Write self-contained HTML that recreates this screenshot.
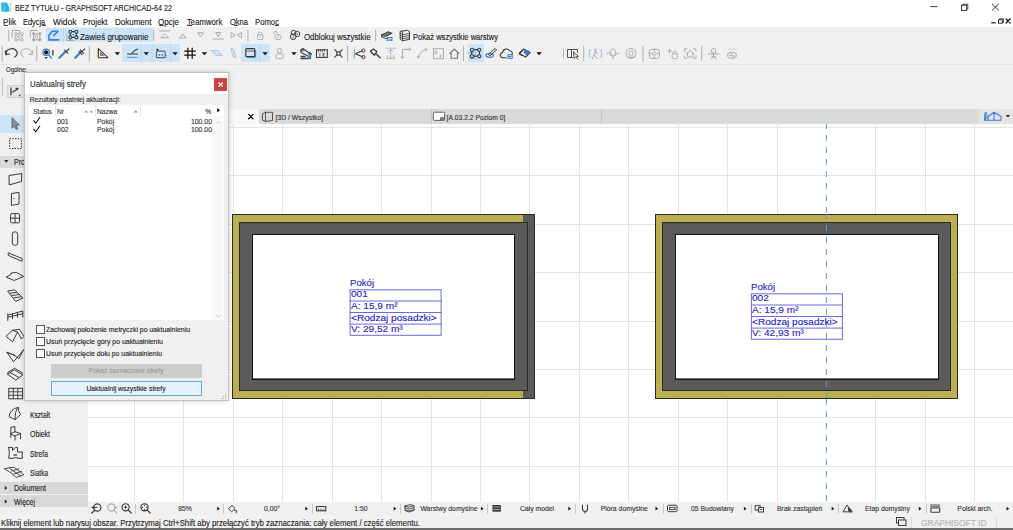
<!DOCTYPE html><html><head><meta charset="utf-8"><style>
html,body{margin:0;padding:0;width:1013px;height:530px;overflow:hidden;background:#f0f0f0;position:relative;font-family:"Liberation Sans",sans-serif}
.a{position:absolute}
.t{white-space:nowrap;line-height:1;-webkit-text-stroke:0.12px currentColor}
svg{position:absolute;overflow:visible}
</style></head><body>
<div class="a" style="left:0px;top:0px;width:1013px;height:27px;background:#ffffff;"></div>
<div class="a t" style="left:15px;top:3.95px;font-size:8.8px;color:#1a1a1a;transform:scaleX(0.8204543984782399);transform-origin:0 0;">BEZ TYTUŁU - GRAPHISOFT ARCHICAD-64 22</div>
<div class="a t" style="left:3.3px;top:17.67px;font-size:8.3px;color:#1a1a1a;transform:scaleX(0.9719864622847055);transform-origin:0 0;">Plik</div>
<div class="a t" style="left:23.4px;top:17.67px;font-size:8.3px;color:#1a1a1a;transform:scaleX(0.891148539182499);transform-origin:0 0;">Edycja</div>
<div class="a t" style="left:52.8px;top:17.67px;font-size:8.3px;color:#1a1a1a;transform:scaleX(1.0190923979366089);transform-origin:0 0;">Widok</div>
<div class="a t" style="left:83.3px;top:17.67px;font-size:8.3px;color:#1a1a1a;transform:scaleX(0.9484670280680911);transform-origin:0 0;">Projekt</div>
<div class="a t" style="left:114.8px;top:17.67px;font-size:8.3px;color:#1a1a1a;transform:scaleX(0.9649459427864713);transform-origin:0 0;">Dokument</div>
<div class="a t" style="left:158.4px;top:17.67px;font-size:8.3px;color:#1a1a1a;transform:scaleX(0.9685830293299047);transform-origin:0 0;">Opcje</div>
<div class="a t" style="left:187px;top:17.67px;font-size:8.3px;color:#1a1a1a;transform:scaleX(0.9334137069522215);transform-origin:0 0;">Teamwork</div>
<div class="a t" style="left:229.7px;top:17.67px;font-size:8.3px;color:#1a1a1a;transform:scaleX(0.9073952714624186);transform-origin:0 0;">Okna</div>
<div class="a t" style="left:255px;top:17.67px;font-size:8.3px;color:#1a1a1a;transform:scaleX(0.9291105581075179);transform-origin:0 0;">Pomoc</div>
<div class="a" style="left:3.8px;top:25px;width:4px;height:0.8px;background:#444;"></div>
<div class="a" style="left:41.5px;top:25px;width:4px;height:0.8px;background:#444;"></div>
<div class="a" style="left:158.6px;top:25px;width:5px;height:0.8px;background:#444;"></div>
<div class="a" style="left:187.3px;top:25px;width:4.5px;height:0.8px;background:#444;"></div>
<div class="a" style="left:234.3px;top:25px;width:4px;height:0.8px;background:#444;"></div>
<div class="a" style="left:275px;top:25px;width:3.8px;height:0.8px;background:#444;"></div>
<div class="a" style="left:88px;top:124px;width:925px;height:378px;background:#ffffff;"></div>
<svg width="1013" height="530" style="left:0;top:0"><rect x="134" y="124" width="1" height="378" fill="#e4e4e4"/><rect x="183" y="124" width="1" height="378" fill="#e4e4e4"/><rect x="233" y="124" width="1" height="378" fill="#e4e4e4"/><rect x="282" y="124" width="1" height="378" fill="#e4e4e4"/><rect x="332" y="124" width="1" height="378" fill="#e4e4e4"/><rect x="381" y="124" width="1" height="378" fill="#e4e4e4"/><rect x="431" y="124" width="1" height="378" fill="#e4e4e4"/><rect x="480" y="124" width="1" height="378" fill="#e4e4e4"/><rect x="529" y="124" width="1" height="378" fill="#e4e4e4"/><rect x="579" y="124" width="1" height="378" fill="#e4e4e4"/><rect x="628" y="124" width="1" height="378" fill="#e4e4e4"/><rect x="678" y="124" width="1" height="378" fill="#e4e4e4"/><rect x="727" y="124" width="1" height="378" fill="#e4e4e4"/><rect x="777" y="124" width="1" height="378" fill="#e4e4e4"/><rect x="875" y="124" width="1" height="378" fill="#e4e4e4"/><rect x="925" y="124" width="1" height="378" fill="#e4e4e4"/><rect x="974" y="124" width="1" height="378" fill="#e4e4e4"/><rect x="88" y="127" width="925" height="1" fill="#e4e4e4"/><rect x="88" y="175" width="925" height="1" fill="#e4e4e4"/><rect x="88" y="224" width="925" height="1" fill="#e4e4e4"/><rect x="88" y="272" width="925" height="1" fill="#e4e4e4"/><rect x="88" y="321" width="925" height="1" fill="#e4e4e4"/><rect x="88" y="369" width="925" height="1" fill="#e4e4e4"/><rect x="88" y="417" width="925" height="1" fill="#e4e4e4"/><rect x="88" y="466" width="925" height="1" fill="#e4e4e4"/><line x1="826.4" y1="124" x2="826.4" y2="502" stroke="#5aa2da" stroke-width="1" stroke-dasharray="6 6" stroke-dashoffset="1"/><rect x="232" y="214" width="303" height="185" fill="#2a2a2a"/><rect x="233" y="215" width="290" height="183" fill="#bcaf52"/><rect x="523" y="215" width="11" height="183" fill="#5a5a5a"/><rect x="239" y="222" width="289" height="169" fill="#2a2a2a"/><rect x="240" y="223" width="287" height="167" fill="#5a5a5a"/><rect x="252" y="234" width="263" height="146" fill="#151515"/><rect x="253" y="235" width="261" height="143.4" fill="#ffffff"/><rect x="655" y="214" width="303" height="185" fill="#2a2a2a"/><rect x="656" y="215" width="301" height="183" fill="#bcaf52"/><rect x="662" y="222" width="289" height="169" fill="#2a2a2a"/><rect x="663" y="223" width="287" height="167" fill="#5a5a5a"/><rect x="675" y="234" width="264" height="146" fill="#151515"/><rect x="676" y="235" width="262" height="143.4" fill="#ffffff"/><line x1="826.4" y1="214" x2="826.4" y2="398" stroke="#5aa2da" stroke-width="1" stroke-dasharray="6 6" stroke-dashoffset="1"/></svg>
<div class="a t" style="left:350.0px;top:279.18px;font-size:9px;color:#2424c4;-webkit-text-stroke:0.12px currentColor;transform:scaleX(1.07);transform-origin:0 0;">Pokój</div>
<svg width="1013" height="530" style="left:0;top:0"><rect x="350.1" y="289.8" width="91" height="45.5" fill="none" stroke="#6a6ae0" stroke-width="1"/><rect x="349.6" y="300.5" width="92" height="1" fill="#6a6ae0"/><rect x="349.6" y="312.0" width="92" height="1" fill="#6a6ae0"/><rect x="349.6" y="323.6" width="92" height="1" fill="#6a6ae0"/></svg>
<div class="a t" style="left:351.0px;top:290.38px;font-size:9px;color:#2424c4;-webkit-text-stroke:0.12px currentColor;transform:scaleX(1.12);transform-origin:0 0;">001</div>
<div class="a t" style="left:351.0px;top:301.73px;font-size:9px;color:#2424c4;-webkit-text-stroke:0.12px currentColor;transform:scaleX(1.12);transform-origin:0 0;">A: 15,9 m²</div>
<div class="a t" style="left:351.0px;top:313.98px;font-size:9px;color:#2424c4;-webkit-text-stroke:0.12px currentColor;transform:scaleX(1.12);transform-origin:0 0;">&lt;Rodzaj posadzki&gt;</div>
<div class="a t" style="left:351.0px;top:324.78px;font-size:9px;color:#2424c4;-webkit-text-stroke:0.12px currentColor;transform:scaleX(1.12);transform-origin:0 0;">V: 29,52 m³</div>
<div class="a t" style="left:751.3px;top:283.18px;font-size:9px;color:#2424c4;-webkit-text-stroke:0.12px currentColor;transform:scaleX(1.07);transform-origin:0 0;">Pokój</div>
<svg width="1013" height="530" style="left:0;top:0"><rect x="751.4" y="293.8" width="91" height="45.5" fill="none" stroke="#6a6ae0" stroke-width="1"/><rect x="750.9" y="304.5" width="92" height="1" fill="#6a6ae0"/><rect x="750.9" y="316.0" width="92" height="1" fill="#6a6ae0"/><rect x="750.9" y="327.6" width="92" height="1" fill="#6a6ae0"/></svg>
<div class="a t" style="left:752.3px;top:294.38px;font-size:9px;color:#2424c4;-webkit-text-stroke:0.12px currentColor;transform:scaleX(1.12);transform-origin:0 0;">002</div>
<div class="a t" style="left:752.3px;top:305.73px;font-size:9px;color:#2424c4;-webkit-text-stroke:0.12px currentColor;transform:scaleX(1.12);transform-origin:0 0;">A: 15,9 m²</div>
<div class="a t" style="left:752.3px;top:317.98px;font-size:9px;color:#2424c4;-webkit-text-stroke:0.12px currentColor;transform:scaleX(1.12);transform-origin:0 0;">&lt;Rodzaj posadzki&gt;</div>
<div class="a t" style="left:752.3px;top:328.78px;font-size:9px;color:#2424c4;-webkit-text-stroke:0.12px currentColor;transform:scaleX(1.12);transform-origin:0 0;">V: 42,93 m³</div>
<div class="a" style="left:88px;top:109px;width:925px;height:15px;background:#d9d9d9;"></div>
<div class="a" style="left:88px;top:109px;width:171px;height:15px;background:#f7f7f7;"></div>
<div class="a" style="left:430.5px;top:109px;width:1px;height:15px;background:#c4c4c4;"></div>
<div class="a" style="left:601px;top:109px;width:1px;height:15px;background:#c4c4c4;"></div>
<div class="a" style="left:978.7px;top:109px;width:34.3px;height:14.6px;background:#e4e4e4;"></div>
<div class="a t" style="left:275.4px;top:115.26px;font-size:6.9px;color:#333;">[3D / Wszystko]</div>
<div class="a t" style="left:446.5px;top:115.39px;font-size:6.75px;color:#333;">[A.03.2.2 Poziom 0]</div>
<div class="a" style="left:0px;top:109px;width:88px;height:393px;background:#f0f0f0;"></div>
<div class="a" style="left:0px;top:114.5px;width:88px;height:18px;background:#cce4f7;"></div>
<div class="a" style="left:0px;top:155.5px;width:88px;height:12.5px;background:#dadada;"></div>
<div class="a" style="left:0px;top:481.8px;width:88px;height:12px;background:#d9d9d9;"></div>
<div class="a" style="left:0px;top:495.3px;width:88px;height:12px;background:#d9d9d9;"></div>
<div class="a t" style="left:30.1px;top:410.87px;font-size:8.3px;color:#222;transform:scaleX(0.8029619258038088);transform-origin:0 0;">Kształt</div>
<div class="a t" style="left:30.1px;top:430.37px;font-size:8.3px;color:#222;transform:scaleX(0.8337849668570475);transform-origin:0 0;">Obiekt</div>
<div class="a t" style="left:30.1px;top:449.97px;font-size:8.3px;color:#222;transform:scaleX(0.8129037174820871);transform-origin:0 0;">Strefa</div>
<div class="a t" style="left:30.1px;top:469.37px;font-size:8.3px;color:#222;transform:scaleX(0.7803181015510854);transform-origin:0 0;">Siatka</div>
<div class="a t" style="left:13.9px;top:158.47px;font-size:8.3px;color:#222;transform:scaleX(0.8516846782652246);transform-origin:0 0;">Projekt</div>
<div class="a t" style="left:13.8px;top:484.27px;font-size:8.3px;color:#222;transform:scaleX(0.8459800046347146);transform-origin:0 0;">Dokument</div>
<div class="a t" style="left:13.8px;top:497.77px;font-size:8.3px;color:#222;transform:scaleX(0.8432417374544263);transform-origin:0 0;">Więcej</div>
<div class="a" style="left:88px;top:502px;width:925px;height:13.5px;background:#f0f0f0;"></div>
<div class="a" style="left:135px;top:504px;width:1px;height:10px;background:#c8c8c8;"></div>
<div class="a" style="left:223px;top:504px;width:1px;height:10px;background:#c8c8c8;"></div>
<div class="a" style="left:311.5px;top:504px;width:1px;height:10px;background:#c8c8c8;"></div>
<div class="a" style="left:400px;top:504px;width:1px;height:10px;background:#c8c8c8;"></div>
<div class="a" style="left:487px;top:504px;width:1px;height:10px;background:#c8c8c8;"></div>
<div class="a" style="left:575px;top:504px;width:1px;height:10px;background:#c8c8c8;"></div>
<div class="a" style="left:663px;top:504px;width:1px;height:10px;background:#c8c8c8;"></div>
<div class="a" style="left:751px;top:504px;width:1px;height:10px;background:#c8c8c8;"></div>
<div class="a" style="left:838px;top:504px;width:1px;height:10px;background:#c8c8c8;"></div>
<div class="a" style="left:926px;top:504px;width:1px;height:10px;background:#c8c8c8;"></div>
<div class="a t" style="left:-15px;width:400px;text-align:center;top:506.20px;font-size:6.85px;color:#333;">85%</div>
<div class="a t" style="left:72px;width:400px;text-align:center;top:506.20px;font-size:6.85px;color:#333;">0,00°</div>
<div class="a t" style="left:161px;width:400px;text-align:center;top:506.20px;font-size:6.85px;color:#333;">1:50</div>
<div class="a t" style="left:249px;width:400px;text-align:center;top:506.20px;font-size:6.85px;color:#333;">Warstwy domyślne</div>
<div class="a t" style="left:337px;width:400px;text-align:center;top:506.20px;font-size:6.85px;color:#333;">Cały model</div>
<div class="a t" style="left:424.29999999999995px;width:400px;text-align:center;top:506.20px;font-size:6.85px;color:#333;">Pióra domyślne</div>
<div class="a t" style="left:512.5px;width:400px;text-align:center;top:506.20px;font-size:6.85px;color:#333;">05 Budowlany</div>
<div class="a t" style="left:599.7px;width:400px;text-align:center;top:506.20px;font-size:6.85px;color:#333;">Brak zastąpień</div>
<div class="a t" style="left:687.4px;width:400px;text-align:center;top:506.20px;font-size:6.85px;color:#333;">Etap domyślny</div>
<div class="a t" style="left:775px;width:400px;text-align:center;top:506.20px;font-size:6.85px;color:#333;">Polski arch.</div>
<div class="a t" style="left:1.4px;top:519.27px;font-size:8.3px;color:#222;transform:scaleX(0.9369298685143173);transform-origin:0 0;">Kliknij element lub narysuj obszar. Przytrzymaj Ctrl+Shift aby przełączyć tryb zaznaczania: cały element / część elementu.</div>
<div class="a t" style="left:921px;top:519.27px;font-size:8.3px;color:#b4b4b4;transform:scaleX(1.0169339393211625);transform-origin:0 0;">GRAPHISOFT ID</div>
<div class="a" style="left:0px;top:528.4px;width:1013px;height:1.6px;background:#6d6d6d;"></div>
<div class="a" style="left:910.5px;top:516.5px;width:0.8px;height:11px;background:#dadada;"></div>
<div class="a" style="left:996.3px;top:516.5px;width:0.8px;height:11px;background:#dadada;"></div>
<div class="a" style="left:0px;top:63.6px;width:1013px;height:0.9px;background:#e4e4e4;"></div>
<div class="a" style="left:46px;top:28px;width:107px;height:14.2px;background:#cce4f7;"></div>
<div class="a" style="left:122.4px;top:43.7px;width:57.6px;height:18.8px;background:#cce4f7;"></div>
<div class="a" style="left:240.8px;top:43.7px;width:29px;height:18.8px;background:#cce4f7;"></div>
<div class="a" style="left:467.7px;top:43.7px;width:16.4px;height:18.8px;background:#cce4f7;"></div>
<svg width="1013" height="530" style="left:0;top:0"><rect x="8.2" y="30" width="1.1" height="11.3" fill="#b5b5b5"/><rect x="153.2" y="30" width="1.1" height="11.3" fill="#b5b5b5"/><rect x="247.4" y="30" width="1.1" height="11.3" fill="#b5b5b5"/><rect x="375.1" y="30" width="1.1" height="11.3" fill="#b5b5b5"/><rect x="1.7000000000000002" y="45.8" width="1.1" height="15.7" fill="#b5b5b5"/><rect x="36.2" y="45.8" width="1.1" height="15.7" fill="#b5b5b5"/><rect x="88.8" y="45.8" width="1.1" height="15.7" fill="#b5b5b5"/><rect x="347.0" y="45.8" width="1.1" height="15.7" fill="#b5b5b5"/><rect x="462.9" y="45.8" width="1.1" height="15.7" fill="#b5b5b5"/><rect x="583.1" y="45.8" width="1.1" height="15.7" fill="#b5b5b5"/><rect x="642.5" y="45.8" width="1.1" height="15.7" fill="#b5b5b5"/><rect x="701.2" y="45.8" width="1.1" height="15.7" fill="#b5b5b5"/><rect x="563" y="48.4" width="1" height="10.4" fill="#b5b5b5"/><rect x="63.2" y="28" width="0.8" height="14.2" fill="#b6d2ea"/><rect x="140.8" y="43.7" width="0.8" height="18.8" fill="#b6d2ea"/><rect x="151.7" y="43.7" width="0.8" height="18.8" fill="#b6d2ea"/><rect x="170" y="43.7" width="0.8" height="18.8" fill="#b6d2ea"/><rect x="259" y="43.7" width="0.8" height="18.8" fill="#b6d2ea"/><path d="M114.7 52.2 L120.10000000000001 52.2 L117.4 55.2 Z" fill="#111"/><path d="M143.5 52.2 L148.89999999999998 52.2 L146.2 55.2 Z" fill="#111"/><path d="M172.4 52.2 L177.79999999999998 52.2 L175.1 55.2 Z" fill="#111"/><path d="M201.70000000000002 52.2 L207.1 52.2 L204.4 55.2 Z" fill="#111"/><path d="M262.40000000000003 52.2 L267.8 52.2 L265.1 55.2 Z" fill="#111"/><path d="M291.3 52.2 L296.7 52.2 L294 55.2 Z" fill="#111"/><path d="M536.4 52.2 L541.8000000000001 52.2 L539.1 55.2 Z" fill="#111"/><g transform="translate(0,0)"><path d="M12.2 37 L12.2 30.5 L19.5 30.5 L19.5 33" stroke="#ababab" stroke-width="1.0" fill="none" stroke-linecap="round" stroke-linejoin="round" /><rect x="15.8" y="33.8" width="6.3" height="6" rx="0" stroke="#ababab" stroke-width="1.0" fill="none"/><circle cx="15.8" cy="33.8" r="1.3" stroke="#ababab" stroke-width="0.9" fill="#f0f0f0"/><circle cx="22.1" cy="33.8" r="1.3" stroke="#ababab" stroke-width="0.9" fill="#f0f0f0"/><circle cx="15.8" cy="39.8" r="1.3" stroke="#ababab" stroke-width="0.9" fill="#f0f0f0"/><circle cx="22.1" cy="39.8" r="1.3" stroke="#ababab" stroke-width="0.9" fill="#f0f0f0"/><circle cx="18.9" cy="36.8" r="1.1" stroke="#ababab" stroke-width="0.9" fill="none"/></g><g transform="translate(0,0)"><path d="M30.3 37 L30.3 30.5 L37.3 30.5" stroke="#ababab" stroke-width="1.0" fill="none" stroke-linecap="round" stroke-linejoin="round" /><rect x="33.6" y="33.8" width="6.3" height="6" rx="0" stroke="#ababab" stroke-width="1.0" fill="none"/><circle cx="33.6" cy="33.8" r="1.2" stroke="#ababab" stroke-width="0.9" fill="#ababab"/><circle cx="39.9" cy="33.8" r="1.2" stroke="#ababab" stroke-width="0.9" fill="#ababab"/><circle cx="33.6" cy="39.8" r="1.2" stroke="#ababab" stroke-width="0.9" fill="#ababab"/><circle cx="39.9" cy="39.8" r="1.2" stroke="#ababab" stroke-width="0.9" fill="#ababab"/><circle cx="36.7" cy="36.8" r="1.4" stroke="#ababab" stroke-width="0.9" fill="none"/></g><g transform="translate(0,0)"><path d="M58.6 39.9 L49 39.9 L49 35.5 L52.2 31.2 L58 31.2 M58 31.2 L53.8 35.4" stroke="#3b7dd8" stroke-width="1.6" fill="none" stroke-linecap="round" stroke-linejoin="round" /></g><g transform="translate(0,0)"><path d="M66.8 34.2 L66.8 40.5 L74.2 40.5" stroke="#ababab" stroke-width="1.0" fill="none" stroke-linecap="round" stroke-linejoin="round" /><path d="M70.4 31.7 L76.4 31.7 L76.4 37.4 L70.4 37.4 Z" stroke="#2f4050" stroke-width="1.3" fill="none" stroke-linecap="round" stroke-linejoin="round" /><circle cx="70.4" cy="31.7" r="1.5" stroke="#2f4050" stroke-width="1.1" fill="#cce4f7"/><circle cx="76.4" cy="31.7" r="1.5" stroke="#2f4050" stroke-width="1.1" fill="#cce4f7"/><circle cx="70.4" cy="37.4" r="1.5" stroke="#2f4050" stroke-width="1.1" fill="#cce4f7"/><circle cx="76.4" cy="37.4" r="1.5" stroke="#2f4050" stroke-width="1.1" fill="#cce4f7"/><rect x="72.8" y="34" width="1.2" height="1.2" fill="#556"/></g><g transform="translate(159.6,30.5)"><path d="M0 0.5 L10 0.5" stroke="#ababab" stroke-width="1.0" fill="none" stroke-linecap="round" stroke-linejoin="round" /><path d="M1.3 7 L5 3.3 L8.7 7 Z" stroke="#ababab" stroke-width="1.0" fill="none" stroke-linecap="round" stroke-linejoin="round" /></g><g transform="translate(179.3,33.5)"><path d="M0.5 4.3 L3.5 0.5 L6.5 4.3 Z" stroke="#ababab" stroke-width="1.0" fill="none" stroke-linecap="round" stroke-linejoin="round" /></g><g transform="translate(197.3,32.6)"><path d="M0.5 0.5 L3.2 4.3 L6 0.5 Z" stroke="#ababab" stroke-width="1.0" fill="none" stroke-linecap="round" stroke-linejoin="round" /></g><g transform="translate(213,32.4)"><path d="M3 0.5 L5.2 4.3 L7.5 0.5 Z M0 6.6 L10.4 6.6" stroke="#ababab" stroke-width="1.0" fill="none" stroke-linecap="round" stroke-linejoin="round" /></g><g transform="translate(230.8,32.2)"><path d="M0.5 0.5 L4.5 3 L0.5 5.5 Z M10.5 0.5 L6.5 3 L10.5 5.5 Z" stroke="#ababab" stroke-width="1.0" fill="none" stroke-linecap="round" stroke-linejoin="round" /></g><g transform="translate(257,31.2)"><rect x="0.5" y="3.5" width="5.5" height="4.8" rx="1" stroke="#ababab" stroke-width="0.9" fill="none"/><path d="M1.5 3.5 L1.5 2.2 A1.8 1.8 0 0 1 5 2.2 L5 3.5" stroke="#ababab" stroke-width="0.9" fill="none" stroke-linecap="round" stroke-linejoin="round" /><path d="M3.25 5 L3.25 6.5" stroke="#ababab" stroke-width="0.8" fill="none" stroke-linecap="round" stroke-linejoin="round" /></g><g transform="translate(273.5,31.2)"><rect x="1.5" y="3.5" width="6" height="4.8" rx="2" stroke="#ababab" stroke-width="0.9" fill="none"/><path d="M0.5 3 L0.5 1.6 A1.8 1.8 0 0 1 4 1.6" stroke="#ababab" stroke-width="0.9" fill="none" stroke-linecap="round" stroke-linejoin="round" /><path d="M4.5 5 L4.5 6.5" stroke="#ababab" stroke-width="0.8" fill="none" stroke-linecap="round" stroke-linejoin="round" /></g><g transform="translate(289.2,29.8)"><circle cx="4" cy="7" r="2.8" stroke="#3c3c3c" stroke-width="1.0" fill="none"/><circle cx="8" cy="4.2" r="2.6" stroke="#3c3c3c" stroke-width="1.0" fill="none"/><circle cx="4.3" cy="2.8" r="2.3" stroke="#3c3c3c" stroke-width="1.0" fill="none"/><path d="M4 6.3 L4 8 M8 3.6 L8 5" stroke="#3c3c3c" stroke-width="0.8" fill="none" stroke-linecap="round" stroke-linejoin="round" /></g><g transform="translate(381.2,29.8)"><path d="M0.5 5 L7 2 L11 3.5 L4.5 6.5 Z" stroke="#3c3c3c" stroke-width="1.0" fill="#777" stroke-linecap="round" stroke-linejoin="round" /><path d="M0.5 7 L4.5 8.7 L6.5 7.8 M0.5 5 L0.5 7" stroke="#3c3c3c" stroke-width="1.0" fill="none" stroke-linecap="round" stroke-linejoin="round" /><rect x="5.5" y="7.2" width="5.8" height="4" fill="#3b7dd8"/><rect x="7" y="8.6" width="2.8" height="1.6" rx="0" stroke="#fff" stroke-width="0.6" fill="none"/></g><g transform="translate(399.5,29.8)"><path d="M1 1.5 L8 0.5 L10 1.8 L10 9.5 L3 11 L1 9.5 Z" stroke="#3c3c3c" stroke-width="1.0" fill="#eee" stroke-linecap="round" stroke-linejoin="round" /><path d="M1 3.5 L3 4.8 L10 3.8 M1 5.5 L3 6.8 L10 5.8 M1 7.5 L3 8.8 L10 7.8 M3 1.5 L3 11" stroke="#3c3c3c" stroke-width="0.8" fill="none" stroke-linecap="round" stroke-linejoin="round" /></g><g transform="translate(0,0)"><path d="M6.2 54.2 A5.6 4.4 0 1 1 14.5 57" stroke="#3c3c3c" stroke-width="1.2" fill="none" stroke-linecap="round" stroke-linejoin="round" /><path d="M5.3 50.8 L5.8 54.6 L9.4 54" stroke="#3c3c3c" stroke-width="1.2" fill="none" stroke-linecap="round" stroke-linejoin="round" /></g><g transform="translate(0,0)"><path d="M31.8 54.2 A5.6 4.4 0 1 0 23.5 57" stroke="#ababab" stroke-width="1.0" fill="none" stroke-linecap="round" stroke-linejoin="round" /><path d="M32.7 50.8 L32.2 54.6 L28.6 54" stroke="#ababab" stroke-width="1.0" fill="none" stroke-linecap="round" stroke-linejoin="round" /></g><g transform="translate(42.4,48.5)"><circle cx="3.8" cy="3.8" r="3.2" stroke="#3b7dd8" stroke-width="1.3" fill="none"/><circle cx="3.8" cy="3.8" r="1.6" stroke="#111" stroke-width="1" fill="#111"/><path d="M6 6 L9 9.5" stroke="#3b7dd8" stroke-width="1.2" fill="none" stroke-linecap="round" stroke-linejoin="round" /><path d="M10.5 2 L10.5 6.5" stroke="#3c3c3c" stroke-width="1.3" fill="none" stroke-linecap="round" stroke-linejoin="round" /><rect x="2.5" y="8.5" width="2.5" height="1.5" fill="#3c3c3c"/></g><g transform="translate(58.2,47.6)"><path d="M1.2 10.2 L7.2 4.2" stroke="#3b7dd8" stroke-width="2.2" fill="none" stroke-linecap="round" stroke-linejoin="round" /><path d="M6.5 2.5 L9.5 5.5 M8.2 3.8 L10.8 1.2" stroke="#3c3c3c" stroke-width="1.2" fill="none" stroke-linecap="round" stroke-linejoin="round" /></g><g transform="translate(74,47.6)"><path d="M1.2 10.2 L7.2 4.2" stroke="#3b7dd8" stroke-width="2.2" fill="none" stroke-linecap="round" stroke-linejoin="round" /><path d="M6.2 2.2 L9.8 5.8 M8.2 3.8 L10.8 1.2 M5 4 L8 7" stroke="#3c3c3c" stroke-width="1.1" fill="none" stroke-linecap="round" stroke-linejoin="round" /></g><g transform="translate(97.4,47.6)"><path d="M1 1 L1 10 L10.5 10 Z" stroke="#3c3c3c" stroke-width="1.1" fill="none" stroke-linecap="round" stroke-linejoin="round" /><path d="M3.3 5.5 L3.3 7.8 L5.6 7.8 Z" stroke="#3c3c3c" stroke-width="0.8" fill="none" stroke-linecap="round" stroke-linejoin="round" /><path d="M0 1 L0 10.5 L10.5 10.5" stroke="#f0b070" stroke-width="0.8" fill="none" stroke-linecap="round" stroke-linejoin="round" stroke-dasharray="1 1"/></g><g transform="translate(127,48.5)"><path d="M0.5 5.5 L10.5 5.5 M4.5 5.5 L7 2.5 L10.5 0.5" stroke="#3c3c3c" stroke-width="1.1" fill="none" stroke-linecap="round" stroke-linejoin="round" /><path d="M0.5 8.8 L10.5 8.8" stroke="#3b7dd8" stroke-width="1.0" fill="none" stroke-linecap="round" stroke-linejoin="round" stroke-dasharray="2 1.2"/></g><g transform="translate(155.6,48.2)"><rect x="0.8" y="3" width="8.8" height="6.5" rx="1.2" stroke="#556677" stroke-width="1.2" fill="none"/><path d="M1 0 L3.5 1.5 L1 3 Z" fill="#223"/><rect x="3" y="6" width="1.5" height="1.5" fill="#556677"/><rect x="6" y="6" width="1.5" height="1.5" fill="#556677"/><rect x="10.5" y="7" width="0.8" height="0.8" fill="#556677"/><rect x="10.5" y="9" width="0.8" height="0.8" fill="#556677"/></g><g transform="translate(184.4,47.7)"><path d="M3.5 0.3 L3.5 10.8 M7.8 0.3 L7.8 10.8 M0.3 3.5 L11 3.5 M0.3 7.5 L11 7.5" stroke="#111" stroke-width="1.2" fill="none" stroke-linecap="round" stroke-linejoin="round" /></g><g transform="translate(211.1,50)"><path d="M0.5 0.5 L7 0.5 L11.5 5.5 L5 5.5 Z" stroke="#a9c6ea" stroke-width="1.0" fill="#dde8f5" stroke-linecap="round" stroke-linejoin="round" /><path d="M2 2 L9 4.5" stroke="#a9c6ea" stroke-width="0.8" fill="none" stroke-linecap="round" stroke-linejoin="round" /></g><g transform="translate(230.3,47.6)"><path d="M1 0.5 L3.5 2 L5.5 10.5 L3 9 Z" stroke="#a9c6ea" stroke-width="1.0" fill="#e0e8f3" stroke-linecap="round" stroke-linejoin="round" /></g><g transform="translate(245.2,48)"><rect x="2" y="2" width="9" height="8" fill="#6aa0e0"/><rect x="0.6" y="0.6" width="9" height="8" rx="1" stroke="#333" stroke-width="1.1" fill="#d8e4ef"/><path d="M1 3 L9.5 3" stroke="#3c3c3c" stroke-width="0.8" fill="none" stroke-linecap="round" stroke-linejoin="round" /></g><g transform="translate(0,0)"><circle cx="279.6" cy="50.6" r="2.2" stroke="#ababab" stroke-width="1.0" fill="none"/><rect x="275.9" y="53.8" width="7.4" height="4.8" rx="1.8" stroke="#ababab" stroke-width="1.0" fill="none"/></g><g transform="translate(300.1,48)"><path d="M0.5 2.2 L3 1 L11 6 M1 4.5 L8 8 M0.5 2.2 L1 4.5" stroke="#3c3c3c" stroke-width="1.1" fill="none" stroke-linecap="round" stroke-linejoin="round" /><circle cx="2.5" cy="1.8" r="1.3" stroke="#3c3c3c" stroke-width="0.9" fill="none"/><circle cx="10" cy="6" r="1.3" stroke="#3c3c3c" stroke-width="0.9" fill="none"/><path d="M1 10.5 L10 10.5 M1 8.5 L5 8.5" stroke="#3c3c3c" stroke-width="1.3" fill="none" stroke-linecap="round" stroke-linejoin="round" /><path d="M7 9 L11 7 L11 11 L7 11 Z" fill="#3b7dd8"/></g><g transform="translate(315.9,49.2)"><rect x="0.6" y="0.6" width="10.8" height="7.6" rx="0" stroke="#3c3c3c" stroke-width="1.1" fill="none"/><path d="M2.5 0.6 L2.5 2.5 M4.5 0.6 L4.5 2 M6.5 0.6 L6.5 2.5 M8.5 0.6 L8.5 2 M4 4 L4 7 M7 4.2 L8.2 4.2 L8.2 5.5 L7 5.5 L7 7 L8.2 7" stroke="#3c3c3c" stroke-width="0.8" fill="none" stroke-linecap="round" stroke-linejoin="round" /></g><g transform="translate(334.2,49.2)"><path d="M0.5 0.5 L3 3 M8 0.5 L5.5 3 M0.5 8 L3 5.5 M8 8 L5.5 5.5 M2.5 2.5 L6 2.5 L6 6 L2.5 6 Z" stroke="#3c3c3c" stroke-width="1.1" fill="none" stroke-linecap="round" stroke-linejoin="round" /></g><g transform="translate(353.4,47.8)"><path d="M0.8 2 L0.8 10" stroke="#3b7dd8" stroke-width="0.9" fill="none" stroke-linecap="round" stroke-linejoin="round" stroke-dasharray="1.2 1.2"/><path d="M2 6 L9 3 M2 6 L9 9" stroke="#3c3c3c" stroke-width="1.1" fill="none" stroke-linecap="round" stroke-linejoin="round" /><circle cx="10" cy="2.8" r="1.6" stroke="#3c3c3c" stroke-width="1.0" fill="none"/><circle cx="10" cy="9.2" r="1.6" stroke="#3c3c3c" stroke-width="1.0" fill="none"/></g><g transform="translate(369.4,48.2)"><path d="M1 3 L4 0.8 L7.5 3.5 L5 7 Z M6.2 5.2 L10.8 9.5" stroke="#3c3c3c" stroke-width="1.4" fill="none" stroke-linecap="round" stroke-linejoin="round" /></g><g transform="translate(385.2,47.8)"><path d="M0.5 0.5 L10.5 0.5" stroke="#a9c6ea" stroke-width="1.0" fill="none" stroke-linecap="round" stroke-linejoin="round" /><path d="M5.5 1.5 L5.5 6 M3.5 3.5 L5.5 1.5 L7.5 3.5 M1.5 10.5 L9.5 10.5 M2.5 8 L2.5 10.5 M5.5 8 L5.5 10.5 M8.5 8 L8.5 10.5" stroke="#ababab" stroke-width="0.9" fill="none" stroke-linecap="round" stroke-linejoin="round" /></g><g transform="translate(401,47.8)"><path d="M1.5 10.5 L1.5 1.5 L9.5 1.5 M0 9 L1.5 10.5 L3 9 M8 0 L9.5 1.5 L8 3" stroke="#ababab" stroke-width="1.0" fill="none" stroke-linecap="round" stroke-linejoin="round" /></g><g transform="translate(417.3,48)"><path d="M1 10 A9 9 0 0 1 9.5 1.5 M0 8.5 L1 10 L2.5 8.8 M8 0.5 L9.8 1.5 L8.5 3" stroke="#ababab" stroke-width="1.0" fill="none" stroke-linecap="round" stroke-linejoin="round" /></g><g transform="translate(433,48.2)"><rect x="0.5" y="0.5" width="10" height="10" rx="0" stroke="#ababab" stroke-width="1.0" fill="none"/><path d="M3 2.5 L3 4.5 M2 3.5 L4 3.5 M7.5 7 L7.5 9 M6.5 8 L8.5 8 M0.5 5.5 L4 5.5" stroke="#ababab" stroke-width="0.8" fill="none" stroke-linecap="round" stroke-linejoin="round" /></g><g transform="translate(449.3,48.5)"><path d="M0.5 5 L5 0.5 L9.5 5 M1.8 3.8 L1.8 9.8 L8.2 9.8 L8.2 3.8" stroke="#7a7a7a" stroke-width="1.1" fill="none" stroke-linecap="round" stroke-linejoin="round" /></g><g transform="translate(469.8,47.7)"><rect x="0.3" y="4.3" width="5" height="6.5" rx="0" stroke="#8899aa" stroke-width="0.9" fill="none"/><path d="M2.8 2 L8.8 2 M2.8 8.5 L8.8 8.5 M2 2.8 L2 7.8 M9.6 2.8 L9.6 7.8" stroke="#334455" stroke-width="1.3" fill="none" stroke-linecap="round" stroke-linejoin="round" /><circle cx="2.2" cy="2.1" r="1.6" stroke="#334455" stroke-width="1.1" fill="#cce4f7"/><circle cx="9.5" cy="2.1" r="1.6" stroke="#334455" stroke-width="1.1" fill="#cce4f7"/><circle cx="2.2" cy="8.6" r="1.6" stroke="#334455" stroke-width="1.1" fill="#cce4f7"/><circle cx="9.5" cy="8.6" r="1.6" stroke="#334455" stroke-width="1.1" fill="#cce4f7"/></g><g transform="translate(485.6,48)"><ellipse cx="4" cy="7.5" rx="3.8" ry="1.8" stroke="#3b7dd8" stroke-width="1.2" fill="none"/><path d="M3 6 L9.5 0.5 L11 2 L4.5 7.5 Z" stroke="#3c3c3c" stroke-width="1.0" fill="none" stroke-linecap="round" stroke-linejoin="round" /></g><g transform="translate(0,0)"><path d="M506 57.8 L503.5 57.8 A2.6 2.6 0 0 1 502.5 52.6 A4 4 0 0 1 509.8 50.8 A2.6 2.6 0 0 1 512 54.5" stroke="#3c3c3c" stroke-width="1.1" fill="none" stroke-linecap="round" stroke-linejoin="round" /><rect x="507.4" y="54.2" width="5.4" height="4.6" fill="#3b7dd8"/><rect x="508.6" y="55.7" width="3" height="1.8" rx="0" stroke="#fff" stroke-width="0.6" fill="none"/></g><g transform="translate(518.7,47.5)"><path d="M0.5 6 L5 1.5 L11.5 5 L7 9.5 Z" stroke="#3c3c3c" stroke-width="1.1" fill="none" stroke-linecap="round" stroke-linejoin="round" /><path d="M5.5 2 L11.5 5 L8 8.5 L5 5 Z" fill="#3b7dd8"/><path d="M3 8 L0.5 6 L4 3" stroke="#3c3c3c" stroke-width="1.1" fill="none" stroke-linecap="round" stroke-linejoin="round" /></g><g transform="translate(0,0)"><path d="M572.5 57.5 L567.5 57.5 L567.5 49.5 L577.5 49.5 L577.5 52.5 M571.5 49.5 L571.5 57.5" stroke="#3c3c3c" stroke-width="0.9" fill="none" stroke-linecap="round" stroke-linejoin="round" /><path d="M573.5 52 L578.5 56.5 L576.3 56.8 L577.5 59.2 M573.5 52 L574.2 58.5 L575.8 56.8" stroke="#3c3c3c" stroke-width="0.9" fill="none" stroke-linecap="round" stroke-linejoin="round" /></g><g transform="translate(0,0)"><path d="M591 50 L589.5 50 L589.5 57 L591 57 M600 50 L601.5 50 L601.5 57 L600 57" stroke="#a9c6ea" stroke-width="1.2" fill="none" stroke-linecap="round" stroke-linejoin="round" /><circle cx="595.5" cy="49.6" r="1.1" stroke="#ababab" stroke-width="0.9" fill="none"/><path d="M595.5 51 L594.2 54.5 L592.5 58.8 M594.2 54.5 L597.5 58.8 M595.2 52 L597.8 53.5" stroke="#ababab" stroke-width="1.0" fill="none" stroke-linecap="round" stroke-linejoin="round" /></g><g transform="translate(607.8,48.4)"><rect x="3" y="0.5" width="4.5" height="7" rx="2.2" stroke="#ababab" stroke-width="1.0" fill="none"/><path d="M1 4 A4.3 4.3 0 0 0 9.5 4 M5.25 8.2 L5.25 10.5 M0 4.5 L-1 5 L0 5.5 M10.5 4.5 L11.5 5 L10.5 5.5" stroke="#ababab" stroke-width="0.9" fill="none" stroke-linecap="round" stroke-linejoin="round" /></g><g transform="translate(625,48.4)"><circle cx="6" cy="5" r="5" stroke="#ababab" stroke-width="1.0" fill="none"/><rect x="4" y="2.5" width="4" height="5" rx="1.5" stroke="#ababab" stroke-width="0.9" fill="none"/><path d="M2.5 9 L9.5 9" stroke="#ababab" stroke-width="0.9" fill="none" stroke-linecap="round" stroke-linejoin="round" /></g><g transform="translate(648.9,48.9)"><rect x="0.5" y="0.5" width="10" height="9" rx="2" stroke="#ababab" stroke-width="1.0" fill="none"/><path d="M5.5 0 L5.5 9.5 M0 4.8 L10.5 4.8" stroke="#ababab" stroke-width="0.9" fill="none" stroke-linecap="round" stroke-linejoin="round" /><path d="M5.5 3 L7.5 4.8 L5.5 6.6 L3.5 4.8 Z" fill="#f0f0f0" stroke="#ababab" stroke-width="0.9"/></g><g transform="translate(667.1,48.4)"><path d="M2.5 0.5 L2.5 4.5 M0.5 2.5 L4.5 2.5" stroke="#ababab" stroke-width="0.9" fill="none" stroke-linecap="round" stroke-linejoin="round" /><rect x="5" y="5.5" width="5.5" height="4.8" rx="1.5" stroke="#ababab" stroke-width="0.9" fill="none"/><path d="M6 5.5 L6 4.2 A1.8 1.8 0 0 1 9.5 4.2 L9.5 5.5" stroke="#ababab" stroke-width="0.9" fill="none" stroke-linecap="round" stroke-linejoin="round" /></g><g transform="translate(683.9,48.4)"><path d="M0.5 3 L0.5 0.5 L3 0.5 M9.5 0.5 L12 0.5 L12 3 M0.5 7.5 L0.5 10 L3 10 M9.5 10 L12 10 L12 7.5" stroke="#ababab" stroke-width="1.0" fill="none" stroke-linecap="round" stroke-linejoin="round" /><path d="M2.5 5.5 L6.2 2 L10 5.5 M3.5 4.8 L3.5 8.5 L9 8.5 L9 4.8" stroke="#ababab" stroke-width="1.0" fill="none" stroke-linecap="round" stroke-linejoin="round" /></g><g transform="translate(707.6,48.2)"><rect x="4" y="0.5" width="4" height="4.5" rx="1" stroke="#ababab" stroke-width="1.0" fill="none"/><path d="M0.5 5.8 L11.5 5.8 M6 5 L6 8 M3.5 11 L6 8 L8.5 11 M4 8.5 L8 8.5" stroke="#ababab" stroke-width="1.0" fill="none" stroke-linecap="round" stroke-linejoin="round" /></g><g transform="translate(726.9,47.8)"><path d="M2 2 L3 0.5 M5 1.5 L5.2 0 M8 2 L7.5 0.5" stroke="#a9c6ea" stroke-width="0.9" fill="none" stroke-linecap="round" stroke-linejoin="round" /><ellipse cx="5" cy="7.5" rx="4.5" ry="3" stroke="#ababab" stroke-width="1" fill="none"/><path d="M1 7 L9 8.5 M4 4.5 L6 10.5" stroke="#ababab" stroke-width="0.8" fill="none" stroke-linecap="round" stroke-linejoin="round" /></g></svg>
<div class="a t" style="left:79.8px;top:32.67px;font-size:8.3px;color:#1a1a1a;transform:scaleX(0.9579642909195955);transform-origin:0 0;">Zawieś grupowanie</div>
<div class="a t" style="left:303.8px;top:32.67px;font-size:8.3px;color:#1a1a1a;transform:scaleX(0.942299436457999);transform-origin:0 0;">Odblokuj wszystkie</div>
<div class="a t" style="left:413.4px;top:32.67px;font-size:8.3px;color:#1a1a1a;transform:scaleX(0.9123861110682497);transform-origin:0 0;">Pokaż wszystkie warstwy</div>
<div class="a t" style="left:6.4px;top:66.90px;font-size:6.5px;color:#222;transform:scaleX(0.9225003603517032);transform-origin:0 0;">Ogólne:</div>
<svg width="1013" height="530" style="left:0;top:0"><g transform="translate(0,0)"><path d="M9.3 175.5 L21.8 173.5 L21.4 181.5 L9.6 184.8 Z" stroke="#3a3a3a" stroke-width="1.0" fill="none" stroke-linecap="round" stroke-linejoin="round" /></g><g transform="translate(0,0)"><path d="M11.8 193.5 L19 192.4 L19 204 L11.8 205.3 Z" stroke="#3a3a3a" stroke-width="1.0" fill="none" stroke-linecap="round" stroke-linejoin="round" /><rect x="13.3" y="198.2" width="1" height="1" fill="#3a3a3a"/></g><g transform="translate(0,0)"><rect x="10.6" y="213.6" width="9" height="9.2" rx="1.3" stroke="#3a3a3a" stroke-width="1.0" fill="none"/><path d="M15.1 213.8 L15.1 222.6 M10.8 218.2 L19.4 218.2" stroke="#3a3a3a" stroke-width="1.0" fill="none" stroke-linecap="round" stroke-linejoin="round" /></g><g transform="translate(0,0)"><rect x="12.3" y="231.8" width="5.4" height="13.5" rx="2.5" stroke="#3a3a3a" stroke-width="1.0" fill="none"/></g><g transform="translate(0,0)"><path d="M8.6 253 L22.3 258.6 L21.8 261.3 L8.6 255.5 Z" stroke="#3a3a3a" stroke-width="1.0" fill="none" stroke-linecap="round" stroke-linejoin="round" /></g><g transform="translate(0,0)"><path d="M6.6 277 L11 274.5 L11 273 L16.5 272.5 L23.6 276.5 L14.5 280.3 Z" stroke="#3a3a3a" stroke-width="1.0" fill="none" stroke-linecap="round" stroke-linejoin="round" /></g><g transform="translate(0,0)"><path d="M8 291 L14.5 289.8 L23 298 L16 301.2 Z M10 293.3 L16.5 292.3 M12.3 295.5 L19 294.5 M14.2 297.8 L21 296.8" stroke="#3a3a3a" stroke-width="1.0" fill="none" stroke-linecap="round" stroke-linejoin="round" /></g><g transform="translate(0,0)"><path d="M7.8 320.5 L7.8 315.2 L22.8 311 L22.8 317 M7.8 315.2 L7.8 313.8 M12.5 313.8 L12.5 318.8 M17.5 312.5 L17.5 317.3 M7.8 317.3 L22.8 313.8" stroke="#3a3a3a" stroke-width="1.0" fill="none" stroke-linecap="round" stroke-linejoin="round" /></g><g transform="translate(0,0)"><path d="M6.3 336 L12.3 330.3 L19.5 329.2 L24 336.5 L21.5 339 L17.5 332 L12.8 341.4 Z M12.3 330.3 L17.5 332" stroke="#3a3a3a" stroke-width="1.0" fill="none" stroke-linecap="round" stroke-linejoin="round" /></g><g transform="translate(0,0)"><path d="M7 352.5 L13.5 361.8 L23.8 349.5 L18.8 358.8 L14.8 355.5 Z M7 352.5 L14.8 355.5" stroke="#3a3a3a" stroke-width="1.0" fill="none" stroke-linecap="round" stroke-linejoin="round" /></g><g transform="translate(0,0)"><path d="M7.8 374 L14.5 369.8 L22.8 375 L16 379.8 Z M7.8 374 L7.8 372.5 L14.5 368.2 L22.8 373.2 M10 372.5 L19 377.5" stroke="#3a3a3a" stroke-width="1.0" fill="none" stroke-linecap="round" stroke-linejoin="round" /></g><g transform="translate(0,0)"><rect x="8.8" y="388.3" width="13.8" height="10.5" rx="0" stroke="#3a3a3a" stroke-width="1.0" fill="none"/><path d="M8.8 391.8 L22.6 391.8 M8.8 395.3 L22.6 395.3 M13.3 388.3 L13.3 398.8 M17.8 388.3 L17.8 398.8" stroke="#3a3a3a" stroke-width="0.9" fill="none" stroke-linecap="round" stroke-linejoin="round" /></g><g transform="translate(0,0)"><path d="M17.9 407.4 Q10 409 9.1 416.6 L15.2 419.6 L20.6 414.5 L18.6 410.8 Z M17.9 407.4 Q14.5 412 15.2 419.6" stroke="#3a3a3a" stroke-width="1.0" fill="none" stroke-linecap="round" stroke-linejoin="round" /></g><g transform="translate(0,0)"><path d="M10.8 437.5 L10.8 427.5 L14.9 426.4 L14.9 432 M10.8 433.6 L15 431.6 L20.6 433.6 L15 435.8 Z M15 435.8 L15 440 M20.6 433.6 L20.6 438.8" stroke="#3a3a3a" stroke-width="1.0" fill="none" stroke-linecap="round" stroke-linejoin="round" /></g><g transform="translate(0,0)"><path d="M8.8 447.4 L12.5 447.4 L12.5 450.5 L15.5 447.4 L17.5 447.4 L17.5 452 L22.5 452 Q21.6 455 22.5 458.3 L19 458.3 Q15.5 457 12 458.3 L8.8 458.3 Q9.8 453 8.8 447.4 Z" stroke="#3a3a3a" stroke-width="1.0" fill="none" stroke-linecap="round" stroke-linejoin="round" /><rect x="13.6" y="454.3" width="3.4" height="1.3" fill="#3a3a3a"/></g><g transform="translate(0,0)"><path d="M4.6 468.8 Q10 467 14.5 467.5 L23.8 474.8 L16.2 477.4 Q12 473 4.6 468.8 Z M9.5 468.2 L20.5 475.8 M11.5 471 L18.8 468.8 M13.8 474 L21.6 471.3" stroke="#3a3a3a" stroke-width="0.9" fill="none" stroke-linecap="round" stroke-linejoin="round" /></g><g transform="translate(0,0)"><path d="M4.2 160 L8.4 160 L6.3 162.8 Z" fill="#222"/><path d="M4.8 486 L7.3 488 L4.8 490 Z" fill="#222"/><path d="M4.8 499.5 L7.3 501.5 L4.8 503.5 Z" fill="#222"/></g><g transform="translate(0,0)"><path d="M12 118 L12 128.3 L14.3 126 L16.2 129.5 L17.8 128.7 L16 125.3 L19.2 125.1 Z" fill="#8a8f96"/><path d="M12 118 L12 128.3 L14.3 126 L16.2 129.5 L17.8 128.7 L16 125.3 L19.2 125.1 Z" stroke="#333" stroke-width="0.6" fill="none" stroke-linecap="round" stroke-linejoin="round" /></g><g transform="translate(0,0)"><rect x="9.6" y="138.7" width="11.8" height="9.8" rx="0" stroke="#333" stroke-width="1.0" fill="none" stroke-dasharray="1.5 1.2"/></g><g transform="translate(0,0)"><rect x="1.8" y="77.7" width="1.3" height="18" fill="#c4c4c4"/><rect x="7.2" y="85.7" width="17.3" height="11.7" rx="0" stroke="#c8c8c8" stroke-width="0.8" fill="#e6e6e6"/><path d="M11 88 L11 94.8 M12.8 92 L17.8 89 M16 88.5 L18 88.5 M19.5 95.5 L20 95.5" stroke="#3c3c3c" stroke-width="1.3" fill="none" stroke-linecap="round" stroke-linejoin="round" /></g><g transform="translate(0,0)"><rect x="1.4" y="2.4" width="9.8" height="9.4" fill="#e6f7fc"/><path d="M1.4 2.4 L6.5 2.4 Q9.5 6 9.4 11.8 L1.4 11.8 Z" fill="#21b4e4"/><path d="M11 2.6 L11 11.6" stroke="#bbb" stroke-width="0.6" fill="none" stroke-linecap="round" stroke-linejoin="round" /><path d="M4 11.8 Q5 6 3.5 2.4" stroke="#7fdcf5" stroke-width="0.8" fill="none" stroke-linecap="round" stroke-linejoin="round" /></g><g transform="translate(0,0)"><path d="M930.6 6.6 L937 6.6" stroke="#222" stroke-width="0.9" fill="none" stroke-linecap="round" stroke-linejoin="round" /><rect x="961.5" y="5.2" width="5.2" height="5.2" rx="0" stroke="#222" stroke-width="0.9" fill="none"/><path d="M963 5.2 L963 4.2 L967.8 4.2 L967.8 9 L966.7 9" stroke="#222" stroke-width="0.8" fill="none" stroke-linecap="round" stroke-linejoin="round" /><path d="M992.3 4 L998.7 10.3 M998.7 4 L992.3 10.3" stroke="#222" stroke-width="0.9" fill="none" stroke-linecap="round" stroke-linejoin="round" /></g><g transform="translate(0,0)"><rect x="991.2" y="22.2" width="4.6" height="1.2" fill="#222"/><rect x="998.5" y="19.8" width="3.8" height="3.4" rx="0" stroke="#222" stroke-width="0.9" fill="none"/><path d="M999.6 19.8 L999.6 18.8 L1003.6 18.8 L1003.6 22.3 L1002.3 22.3" stroke="#222" stroke-width="0.8" fill="none" stroke-linecap="round" stroke-linejoin="round" /><path d="M1006.1 19 L1010.2 23 M1010.2 19 L1006.1 23" stroke="#111" stroke-width="1.3" fill="none" stroke-linecap="round" stroke-linejoin="round" /></g><g transform="translate(0,0)"><path d="M248.6 114.4 L253 118.8 M253 114.4 L248.6 118.8" stroke="#111" stroke-width="1.3" fill="none" stroke-linecap="round" stroke-linejoin="round" /></g><g transform="translate(0,0)"><path d="M262.8 113.8 L265.5 112.3 L272.5 112.3 L272.5 120.5 L265.5 121.4 L262.8 120.2 Z M265.5 112.3 L265.5 121.4" stroke="#444" stroke-width="0.9" fill="none" stroke-linecap="round" stroke-linejoin="round" /></g><g transform="translate(0,0)"><rect x="433.4" y="112.2" width="11.2" height="8.2" rx="1" stroke="#555" stroke-width="0.9" fill="#fff"/><rect x="440" y="117.2" width="4.6" height="3.2" fill="#777"/></g><g transform="translate(0,0)"><path d="M984.5 113 A1.3 1.3 0 1 1 986 114.6 L986 120.5 L983.8 120.5 Z" fill="#4a86d9"/><path d="M985 116 L988 116 M985 118 L988 118 M985 120.3 L1001 120.3 M988 120.3 L988 116.5 L994 112.3 L1001 116.5 L1001 120.3 M994 112.3 L994 120.3" stroke="#3b7dd8" stroke-width="1.1" fill="none" stroke-linecap="round" stroke-linejoin="round" /><path d="M1005.8 115 L1010 115 L1007.9 117.6 Z" fill="#222"/></g><g transform="translate(0,0)"><circle cx="97.3" cy="507.5" r="3.6" stroke="#3c3c3c" stroke-width="1.1" fill="none"/><path d="M94.8 510.2 L91.6 513.2" stroke="#3c3c3c" stroke-width="1.2" fill="none" stroke-linecap="round" stroke-linejoin="round" /><path d="M91 507.5 L94.5 505.8 L94.5 509.2 Z" fill="#3c3c3c"/><path d="M94 507.5 L97 507.5" stroke="#3c3c3c" stroke-width="0.9" fill="none" stroke-linecap="round" stroke-linejoin="round" /></g><g transform="translate(0,0)"><circle cx="111.3" cy="507.5" r="3.6" stroke="#ababab" stroke-width="1.1" fill="none"/><path d="M113.8 510.2 L116.8 513.2" stroke="#ababab" stroke-width="1.2" fill="none" stroke-linecap="round" stroke-linejoin="round" /><path d="M117.5 507.5 L114 505.8 L114 509.2 Z" fill="#ababab"/></g><g transform="translate(0,0)"><circle cx="125.6" cy="507.3" r="3.6" stroke="#3c3c3c" stroke-width="1.1" fill="none"/><path d="M128.2 510 L131.2 513" stroke="#3c3c3c" stroke-width="1.2" fill="none" stroke-linecap="round" stroke-linejoin="round" /><path d="M125.6 505.8 L127.1 507.3 L125.6 508.8 L124.1 507.3 Z" fill="#3c3c3c"/></g><g transform="translate(0,0)"><circle cx="144.5" cy="507.3" r="3.6" stroke="#3c3c3c" stroke-width="1.1" fill="none"/><path d="M147.1 510 L150.1 513" stroke="#3c3c3c" stroke-width="1.2" fill="none" stroke-linecap="round" stroke-linejoin="round" /><rect x="144" y="504.6" width="1.2" height="1.2" fill="#3c3c3c"/><rect x="144" y="509" width="1.2" height="1.2" fill="#3c3c3c"/><rect x="141.8" y="506.8" width="1.2" height="1.2" fill="#3c3c3c"/><rect x="146.2" y="506.8" width="1.2" height="1.2" fill="#3c3c3c"/></g><g transform="translate(0,0)"><path d="M228.8 508.5 L232 505.5 L235.2 508.5 L232 511.5 Z" stroke="#3c3c3c" stroke-width="1.0" fill="none" stroke-linecap="round" stroke-linejoin="round" /><path d="M234.5 510.5 L236.8 510.8 L236.3 512.8" stroke="#3c3c3c" stroke-width="0.9" fill="none" stroke-linecap="round" stroke-linejoin="round" /></g><g transform="translate(0,0)"><rect x="316.5" y="506.6" width="9.3" height="4.2" rx="0" stroke="#3c3c3c" stroke-width="1.1" fill="none"/><path d="M318.5 509.3 L318.5 510.5 M320.8 509.3 L320.8 510.5 M323.1 509.3 L323.1 510.5" stroke="#3c3c3c" stroke-width="0.8" fill="none" stroke-linecap="round" stroke-linejoin="round" /></g><g transform="translate(0,0)"><path d="M405 506 L410 504.6 L414 505.6 L409 507 Z M405 508 L409 509 L414 507.6 M405 510 L409 511 L414 509.6 M405 506 L405 510.5 L409 512 L414 510.5 L414 505.6" stroke="#3c3c3c" stroke-width="0.9" fill="none" stroke-linecap="round" stroke-linejoin="round" /></g><g transform="translate(0,0)"><rect x="492.5" y="505" width="8.4" height="6.7" fill="#3c3c3c"/><path d="M494 507 L499.5 507 M494 509.5 L499.5 509.5" stroke="#f0f0f0" stroke-width="0.6" fill="none" stroke-linecap="round" stroke-linejoin="round" stroke-dasharray="0.8 0.8"/></g><g transform="translate(0,0)"><path d="M582.5 505 L582.5 509 A2.5 2.5 0 0 0 587.5 509 L587.5 505 M585 511.5 L585 513" stroke="#3c3c3c" stroke-width="1.1" fill="none" stroke-linecap="round" stroke-linejoin="round" /></g><g transform="translate(0,0)"><rect x="667.5" y="505.2" width="9.5" height="6.5" rx="1.2" stroke="#3c3c3c" stroke-width="1.0" fill="none"/><rect x="669.5" y="507.3" width="5.5" height="2.3" rx="0" stroke="#3c3c3c" stroke-width="0.9" fill="none"/></g><g transform="translate(0,0)"><rect x="755.2" y="505.6" width="5" height="4.5" rx="0" stroke="#3c3c3c" stroke-width="1.0" fill="none"/><rect x="758.5" y="507.5" width="5" height="4.5" rx="0" stroke="#3c3c3c" stroke-width="1.0" fill="#f0f0f0"/><path d="M760 509.5 L762 509.5" stroke="#3c3c3c" stroke-width="0.8" fill="none" stroke-linecap="round" stroke-linejoin="round" /></g><g transform="translate(0,0)"><path d="M843.2 511.5 L847 505 L852 511.5 Z" stroke="#3c3c3c" stroke-width="1.0" fill="none" stroke-linecap="round" stroke-linejoin="round" /><path d="M847.8 507 L848.3 512.5 L849.5 511 L851 513 L851.8 512.5 L850.6 510.6 L852.3 510.3 Z" fill="#3c3c3c"/></g><g transform="translate(0,0)"><path d="M930.5 505 L939.8 505 M930.5 506.8 L939.8 506.8" stroke="#3c3c3c" stroke-width="0.9" fill="none" stroke-linecap="round" stroke-linejoin="round" /><rect x="930.8" y="508" width="9" height="4.2" rx="1" stroke="#3c3c3c" stroke-width="1.1" fill="none"/></g><g transform="translate(0,0)"><path d="M217.1 506.8 L219.79999999999998 508.7 L217.1 510.6 Z" fill="#111"/></g><g transform="translate(0,0)"><path d="M305.29999999999995 506.8 L308.0 508.7 L305.29999999999995 510.6 Z" fill="#111"/></g><g transform="translate(0,0)"><path d="M393.7 506.8 L396.40000000000003 508.7 L393.7 510.6 Z" fill="#111"/></g><g transform="translate(0,0)"><path d="M480.9 506.8 L483.6 508.7 L480.9 510.6 Z" fill="#111"/></g><g transform="translate(0,0)"><path d="M568.3 506.8 L571.0 508.7 L568.3 510.6 Z" fill="#111"/></g><g transform="translate(0,0)"><path d="M655.5 506.8 L658.2 508.7 L655.5 510.6 Z" fill="#111"/></g><g transform="translate(0,0)"><path d="M743.9 506.8 L746.6 508.7 L743.9 510.6 Z" fill="#111"/></g><g transform="translate(0,0)"><path d="M831.6999999999999 506.8 L834.4 508.7 L831.6999999999999 510.6 Z" fill="#111"/></g><g transform="translate(0,0)"><path d="M918.8 506.8 L921.5 508.7 L918.8 510.6 Z" fill="#111"/></g><g transform="translate(0,0)"><path d="M1006.5 506.8 L1009.2 508.7 L1006.5 510.6 Z" fill="#111"/></g><g transform="translate(0,0)"><rect x="896.5" y="517.5" width="7.5" height="5.5" rx="0" stroke="#3c3c3c" stroke-width="1.0" fill="none"/><rect x="898.5" y="520" width="7.5" height="5.5" rx="0" stroke="#3c3c3c" stroke-width="1.0" fill="#f0f0f0"/></g></svg>
<div class="a" style="left:24.5px;top:73px;width:203.5px;height:327px;background:#f0f0f0;box-shadow:0 0 5px 1px rgba(0,0,0,0.2);outline:1px solid #c2c2c2"></div>
<div class="a" style="left:24.5px;top:73px;width:203.5px;height:20.5px;background:#ffffff;"></div>
<div class="a" style="left:214.3px;top:78.2px;width:12.7px;height:12.6px;background:#c94545;"></div>
<svg width="1013" height="530" style="left:0;top:0"><path d="M218.6 82.5 L222.7 86.6 M222.7 82.5 L218.6 86.6" stroke="#fff" stroke-width="1.1"/></svg>
<div class="a t" style="left:29.7px;top:80.37px;font-size:8.3px;color:#2a2a2a;transform:scaleX(0.9484848853746488);transform-origin:0 0;">Uaktualnij strefy</div>
<div class="a t" style="left:29.8px;top:96.85px;font-size:6.68px;color:#2a2a2a;">Rezultaty ostatniej aktualizacji:</div>
<div class="a" style="left:29px;top:104.6px;width:194.5px;height:215px;background:#ffffff;"></div>
<div class="a" style="left:212.3px;top:115.6px;width:11px;height:204px;background:#f9f9f9;"></div>
<div class="a" style="left:54.5px;top:105px;width:0.8px;height:10.5px;background:#e4e4e4;"></div>
<div class="a" style="left:95px;top:105px;width:0.8px;height:10.5px;background:#e4e4e4;"></div>
<div class="a" style="left:140px;top:105px;width:0.8px;height:10.5px;background:#e4e4e4;"></div>
<div class="a t" style="left:33.2px;top:108.61px;font-size:6.6px;color:#333;">Status</div>
<div class="a t" style="left:56.9px;top:108.61px;font-size:6.6px;color:#333;">Nr</div>
<div class="a t" style="left:97px;top:108.61px;font-size:6.6px;color:#333;">Nazwa</div>
<div class="a t" style="right:801.8px;top:108.61px;font-size:6.6px;color:#333;">%</div>
<svg width="1013" height="530" style="left:0;top:0"><path d="M84.3 112.4 L86.3 110.6 L88.3 112.4 Z M89.3 112.4 L91.3 110.6 L93.3 112.4 Z" fill="#999"/><path d="M133.4 112.6 L135.8 110.2 L138.2 112.6 Z" fill="#999"/><path d="M217.2 108 L220 110.2 L217.2 112.4 Z" fill="#111"/><path d="M216.2 123.6 L218.4 121.4 L220.6 123.6" fill="none" stroke="#bbb" stroke-width="0.8"/><path d="M216.2 315 L218.4 317.2 L220.6 315" fill="none" stroke="#bbb" stroke-width="0.8"/><path d="M33.5 120.4 L35.8 123.2 L40 117.2 M33.5 128.9 L35.8 131.7 L40 125.7" fill="none" stroke="#111" stroke-width="1.1"/></svg>
<div class="a t" style="left:57.1px;top:119.06px;font-size:6.9px;color:#333;">001</div>
<div class="a t" style="left:97px;top:119.06px;font-size:6.9px;color:#333;">Pokój</div>
<div class="a t" style="right:801px;top:119.06px;font-size:6.9px;color:#333;">100.00</div>
<div class="a t" style="left:57.1px;top:126.66px;font-size:6.9px;color:#333;">002</div>
<div class="a t" style="left:97px;top:126.66px;font-size:6.9px;color:#333;">Pokój</div>
<div class="a t" style="right:801px;top:126.66px;font-size:6.9px;color:#333;">100.00</div>
<div class="a" style="left:35.6px;top:325.3px;width:7px;height:7px;border:1px solid #555;background:#fff"></div>
<div class="a t" style="left:45.6px;top:327.19px;font-size:6.75px;color:#222;transform:scaleX(1.0207794408640738);transform-origin:0 0;">Zachowaj położenie metryczki po uaktualnieniu</div>
<div class="a" style="left:35.6px;top:337.25px;width:7px;height:7px;border:1px solid #555;background:#fff"></div>
<div class="a t" style="left:45.6px;top:339.14px;font-size:6.75px;color:#222;transform:scaleX(1.0274309861458588);transform-origin:0 0;">Usuń przycięcie góry po uaktualnieniu</div>
<div class="a" style="left:35.6px;top:349.2px;width:7px;height:7px;border:1px solid #555;background:#fff"></div>
<div class="a t" style="left:45.6px;top:351.09px;font-size:6.75px;color:#222;transform:scaleX(1.0237179480550014);transform-origin:0 0;">Usuń przycięcie dołu po uaktualnieniu</div>
<div class="a" style="left:51px;top:363.8px;width:150.6px;height:13.8px;background:#cccccc;"></div>
<div class="a t" style="left:-73.65px;width:400px;text-align:center;top:368.19px;font-size:6.75px;color:#9a9a9a;transform:scaleX(0.992888085082679);transform-origin:50% 0;">Pokaż zaznaczone strefy</div>
<div class="a" style="left:51px;top:381.2px;width:148.6px;height:12.4px;background:#e5f1fb;border:1px solid #62a8e4"></div>
<div class="a t" style="left:-74px;width:400px;text-align:center;top:385.79px;font-size:6.75px;color:#1a1a1a;transform:scaleX(1.0054674075561805);transform-origin:50% 0;">Uaktualnij wszystkie strefy</div>
<svg width="1013" height="530" style="left:0;top:0"><g fill="#aaa"><rect x="225" y="394" width="1" height="1"/><rect x="223" y="396" width="1" height="1"/><rect x="225" y="396" width="1" height="1"/><rect x="221" y="398" width="1" height="1"/><rect x="223" y="398" width="1" height="1"/><rect x="225" y="398" width="1" height="1"/></g></svg>
</body></html>
